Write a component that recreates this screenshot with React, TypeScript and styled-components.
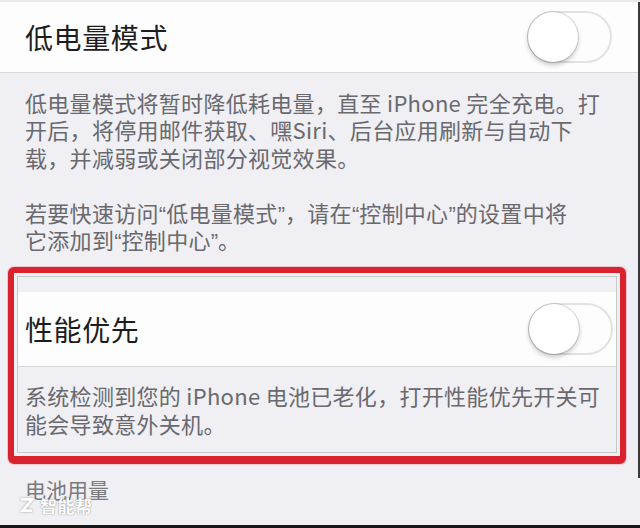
import React, { FC, ReactNode } from 'react'
import styled, { createGlobalStyle } from 'styled-components'

const GlobalStyle = createGlobalStyle`
  html, body {
    margin: 0;
    padding: 0;
    background: #efeff4;
  }
  * {
    box-sizing: border-box;
  }
`;

// curly quotes in the reference are half width, so they get a latin font
const q = (text: string): ReactNode[] =>
  text.split(/([“”])/).map((part, i) =>
    part === "“" || part === "”" ? <Quote key={i}>{part}</Quote> : part
  );

const lowPowerLines = [
  "低电量模式将暂时降低耗电量，直至 iPhone 完全充电。打",
  "开后，将停用邮件获取、嘿Siri、后台应用刷新与自动下",
  "载，并减弱或关闭部分视觉效果。",
];

const shortcutLines = [
  "若要快速访问“低电量模式”，请在“控制中心”的设置中将",
  "它添加到“控制中心”。",
];

const performanceLines = [
  "系统检测到您的 iPhone 电池已老化，打开性能优先开关可",
  "能会导致意外关机。",
];

interface ISettingRow {
  title: string;
  inset?: boolean;
}

const SettingRow: FC<ISettingRow> = ({ title, inset = false }) => (
  <Row inset={inset}>
    <RowTitle>{title}</RowTitle>
    <Toggle>
      <Knob />
    </Toggle>
  </Row>
);

const Paragraph: FC<{ lines: string[] }> = ({ lines }) => (
  <Para>
    {lines.map((line) => (
      <Line key={line}>{q(line)}</Line>
    ))}
  </Para>
);

const App: FC = () => {
  return (
    <>
      <GlobalStyle />
      <Screen>
        <SettingRow title="低电量模式" />
        <Footer>
          <Paragraph lines={lowPowerLines} />
          <Paragraph lines={shortcutLines} />
        </Footer>

        <Highlight>
          <HighlightInner>
            <SettingRow title="性能优先" inset />
            <Footer inset>
              <Paragraph lines={performanceLines} />
            </Footer>
          </HighlightInner>
        </Highlight>

        <SectionLabel>电池用量</SectionLabel>

        <Watermark>
          <WatermarkLogo viewBox="0 0 16 18">
            <path d="M2 3 H14 L4 15 H14" fill="none" stroke="#fff" strokeWidth="3" strokeLinejoin="miter" />
          </WatermarkLogo>
          <WatermarkText>智能帮</WatermarkText>
        </Watermark>

        <EdgeShade />
      </Screen>
    </>
  );
};

export default App;

const Screen = styled.div`
  position: relative;
  width: 640px;
  height: 528px;
  overflow: hidden;
  background: #efeff4;
  border-top: 2px solid #e9e9ec;
  border-bottom: 3px solid #161616;
  font-family: "Noto Sans CJK SC", "Noto Sans", sans-serif;
`;

const Row = styled.div<{ inset: boolean }>`
  display: flex;
  align-items: center;
  justify-content: space-between;
  height: ${({ inset }) => (inset ? "75px" : "71px")};
  padding: ${({ inset }) => (inset ? "0 3px 0 7px" : "0 28px 0 25px")};
  background: #fdfdfd;
  border-bottom: 1px solid #d6d6db;
`;

const RowTitle = styled.div`
  font-size: 28px;
  letter-spacing: 0.6px;
  color: #1d1d1f;
  line-height: 1;
`;

const Toggle = styled.div`
  position: relative;
  width: 85px;
  height: 52px;
  border-radius: 26px;
  border: 2px solid #e2e2e5;
  background: #fdfdfd;
`;

const Knob = styled.div`
  position: absolute;
  left: -1px;
  top: -1px;
  width: 50px;
  height: 50px;
  border-radius: 50%;
  background: #fff;
  box-shadow: 0 0 0 1px rgba(0, 0, 0, 0.12), 0 3px 5px rgba(0, 0, 0, 0.22);
`;

const Footer = styled.div<{ inset?: boolean }>`
  padding: ${({ inset }) => (inset ? "15px 0 15px 7px" : "16px 0 13px 25px")};
  display: flex;
  flex-direction: column;
  gap: 27.4px;
`;

const Para = styled.div`
  display: flex;
  flex-direction: column;
`;

const Line = styled.div`
  height: 27.4px;
  font-size: 22px;
  letter-spacing: 0.3px;
  line-height: 27.4px;
  color: #69696e;
  white-space: nowrap;
`;

const Quote = styled.span`
  font-family: "Liberation Sans", sans-serif;
  letter-spacing: 0;
  line-height: 1;
`;

const Highlight = styled.div`
  margin: 1px 14px 0 8px;
  border: 6px solid #d8232f;
  border-bottom-width: 8px;
  border-radius: 6px;
  padding: 3px;
  box-shadow: 0 0 0 1px rgba(240, 170, 180, 0.6);
`;

const HighlightInner = styled.div`
  border: 1px solid #c4cbc9;
  padding-top: 15px;
  background: #efeff4;
`;

const SectionLabel = styled.div`
  margin-top: 12px;
  padding-left: 25px;
  font-size: 21px;
  line-height: 27px;
  color: #7a7a7f;
`;

const Watermark = styled.div`
  position: absolute;
  left: 19px;
  top: 494px;
  display: flex;
  align-items: center;
  gap: 6px;
  line-height: 1;
`;

const WatermarkLogo = styled.svg`
  width: 15px;
  height: 18px;
  filter: drop-shadow(0 0 1px rgba(0, 0, 0, 0.35));
`;

const WatermarkText = styled.span`
  font-size: 17px;
  font-weight: 700;
  color: #fff;
  letter-spacing: 0.5px;
  text-shadow: 0 0 1px rgba(0, 0, 0, 0.4), 0 0 2px rgba(0, 0, 0, 0.2);
`;

const EdgeShade = styled.div`
  position: absolute;
  top: 0;
  right: 0;
  width: 2px;
  height: 476px;
  background: #3a3a3c;
`;
